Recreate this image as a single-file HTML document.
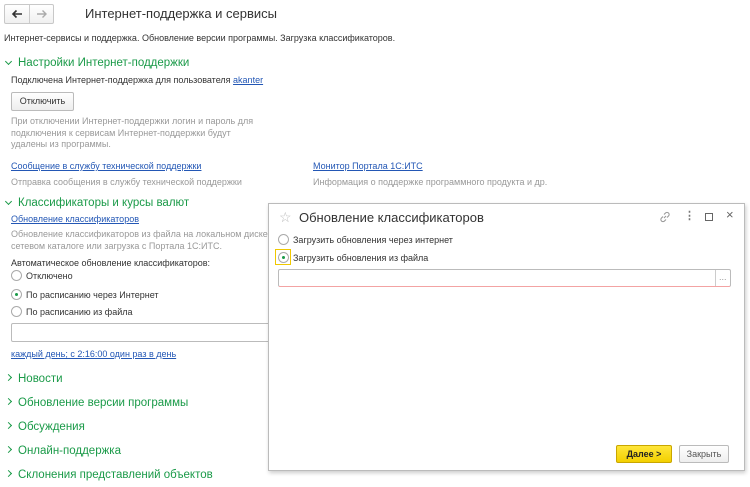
<!DOCTYPE html>
<html><head><meta charset="utf-8"><style>
*{margin:0;padding:0;box-sizing:border-box}
body{width:750px;height:487px;background:#fff;font-family:"Liberation Sans",Arial,sans-serif;font-size:9px;color:#333;position:relative;overflow:hidden}
.a{position:absolute;white-space:nowrap}
.g{color:#999}
.gr{color:#1a9a48;font-size:11.5px}
.l{color:#2357b5;text-decoration:underline}
.rad{position:absolute;width:11px;height:11px;border:1px solid #aaa;border-radius:50%;background:#fff}
.rad.on::after{content:"";position:absolute;left:3px;top:3px;width:3px;height:3px;border-radius:50%;background:#1a9a48}
.chev{display:inline-block;width:5px;height:5px;border-right:1.3px solid #1a9a48;border-bottom:1.3px solid #1a9a48;margin-right:7px;vertical-align:2px}
.down{transform:rotate(45deg)}
.right{transform:rotate(-45deg)}
</style></head><body>
<div class="a" style="left:4px;top:4px;width:50px;height:20px;border:1px solid #c8c8c8;border-radius:2px;background:linear-gradient(#fff,#f0f0f0)"></div>
<div class="a" style="left:29px;top:5px;width:1px;height:18px;background:#ccc"></div>
<svg class="a" style="left:11px;top:9px" width="12" height="10" viewBox="0 0 12 10" fill="none" stroke="#333" stroke-width="1.6"><path d="M11 5H2M5.5 1.5L2 5l3.5 3.5"/></svg>
<svg class="a" style="left:36px;top:9px" width="12" height="10" viewBox="0 0 12 10" fill="none" stroke="#aaa" stroke-width="1.4"><path d="M1 5h9M6.5 1.5L10 5 6.5 8.5"/></svg>
<div class="a" style="left:85px;top:6px;font-size:13px;color:#333">Интернет-поддержка и сервисы</div>
<div class="a" style="left:4px;top:33px">Интернет-сервисы и поддержка. Обновление версии программы. Загрузка классификаторов.</div>
<div class="a gr" style="left:6px;top:57px"><span class="chev down"></span>Настройки Интернет-поддержки</div>
<div class="a" style="left:11px;top:75px">Подключена Интернет-поддержка для пользователя <span class="l">akanter</span></div>
<div class="a" style="left:11px;top:92px;width:63px;height:19px;border:1px solid #bbb;border-radius:2px;background:linear-gradient(#fff,#eee);text-align:center;line-height:17px">Отключить</div>
<div class="a g" style="left:11px;top:116px;line-height:11.5px;white-space:normal;width:250px">При отключении Интернет-поддержки логин и пароль для подключения к сервисам Интернет-поддержки будут удалены из программы.</div>
<div class="a l" style="left:11px;top:161px">Сообщение в службу технической поддержки</div>
<div class="a g" style="left:11px;top:177px">Отправка сообщения в службу технической поддержки</div>
<div class="a l" style="left:313px;top:161px">Монитор Портала 1С:ИТС</div>
<div class="a g" style="left:313px;top:177px">Информация о поддержке программного продукта и др.</div>
<div class="a gr" style="left:6px;top:197px"><span class="chev down"></span>Классификаторы и курсы валют</div>
<div class="a l" style="left:11px;top:214px">Обновление классификаторов</div>
<div class="a g" style="left:11px;top:229px;line-height:11.5px">Обновление классификаторов из файла на локальном диске, в<br>сетевом каталоге или загрузка с Портала 1С:ИТС.</div>
<div class="a" style="left:11px;top:258px">Автоматическое обновление классификаторов:</div>
<div class="rad" style="left:11px;top:270px"></div><div class="a" style="left:26px;top:271px">Отключено</div>
<div class="rad on" style="left:11px;top:289px"></div><div class="a" style="left:26px;top:290px">По расписанию через Интернет</div>
<div class="rad" style="left:11px;top:306px"></div><div class="a" style="left:26px;top:307px">По расписанию из файла</div>
<div class="a" style="left:11px;top:323px;width:265px;height:19px;border:1px solid #bbb;border-radius:2px"></div>
<div class="a l" style="left:11px;top:349px">каждый день; с 2:16:00 один раз в день</div>
<div class="a gr" style="left:6px;top:373px"><span class="chev right"></span>Новости</div>
<div class="a gr" style="left:6px;top:397px"><span class="chev right"></span>Обновление версии программы</div>
<div class="a gr" style="left:6px;top:421px"><span class="chev right"></span>Обсуждения</div>
<div class="a gr" style="left:6px;top:445px"><span class="chev right"></span>Онлайн-поддержка</div>
<div class="a gr" style="left:6px;top:469px"><span class="chev right"></span>Склонения представлений объектов</div>

<div class="a" style="left:268px;top:203px;width:477px;height:268px;border:1px solid #bbb;background:#fff;box-shadow:1px 2px 4px rgba(0,0,0,.2)">
<div class="a" style="left:10px;top:5px;font-size:14px;color:#bbb">☆</div>
<div class="a" style="left:30px;top:6px;font-size:13px;color:#333">Обновление классификаторов</div>
<svg class="a" style="left:390px;top:7px" width="12" height="12" viewBox="0 0 12 12" fill="none" stroke="#999" stroke-width="1.1"><path d="M5 7L7 5M4 5.5L2.5 7a2 2 0 003 3L7 8.5M8 6.5L9.5 5a2 2 0 00-3-3L5 3.5"/></svg>
<div class="a" style="left:415px;top:5px;font-size:11px;color:#777;font-weight:bold">⋮</div>
<div class="a" style="left:436px;top:9px;width:8px;height:8px;border:1.3px solid #666"></div>
<div class="a" style="left:457px;top:3px;font-size:13px;color:#666">×</div>
<div class="rad" style="left:9px;top:30px"></div><div class="a" style="left:24px;top:31px">Загрузить обновления через интернет</div>
<div class="a" style="left:6px;top:45px;width:16px;height:16px;border:1px solid #f0c800"></div>
<div class="rad on" style="left:9px;top:48px"></div><div class="a" style="left:24px;top:49px">Загрузить обновления из файла</div>
<div class="a" style="left:9px;top:65px;width:453px;height:18px;border:1px solid #bbb;border-radius:2px;border-bottom:1px solid #f3a3a3"></div>
<div class="a" style="left:446px;top:66px;width:1px;height:16px;background:#ccc"></div>
<div class="a" style="left:450px;top:68px;color:#999">...</div>
<div class="a" style="left:347px;top:241px;width:56px;height:18px;border:1px solid #c9a600;border-radius:2px;background:linear-gradient(#ffe63a,#f3d000);text-align:center;line-height:16px;font-weight:bold;color:#222">Далее &gt;</div>
<div class="a" style="left:410px;top:241px;width:50px;height:18px;border:1px solid #bbb;border-radius:2px;background:linear-gradient(#fff,#eee);text-align:center;line-height:16px;color:#555">Закрыть</div>
</div>
</body></html>
